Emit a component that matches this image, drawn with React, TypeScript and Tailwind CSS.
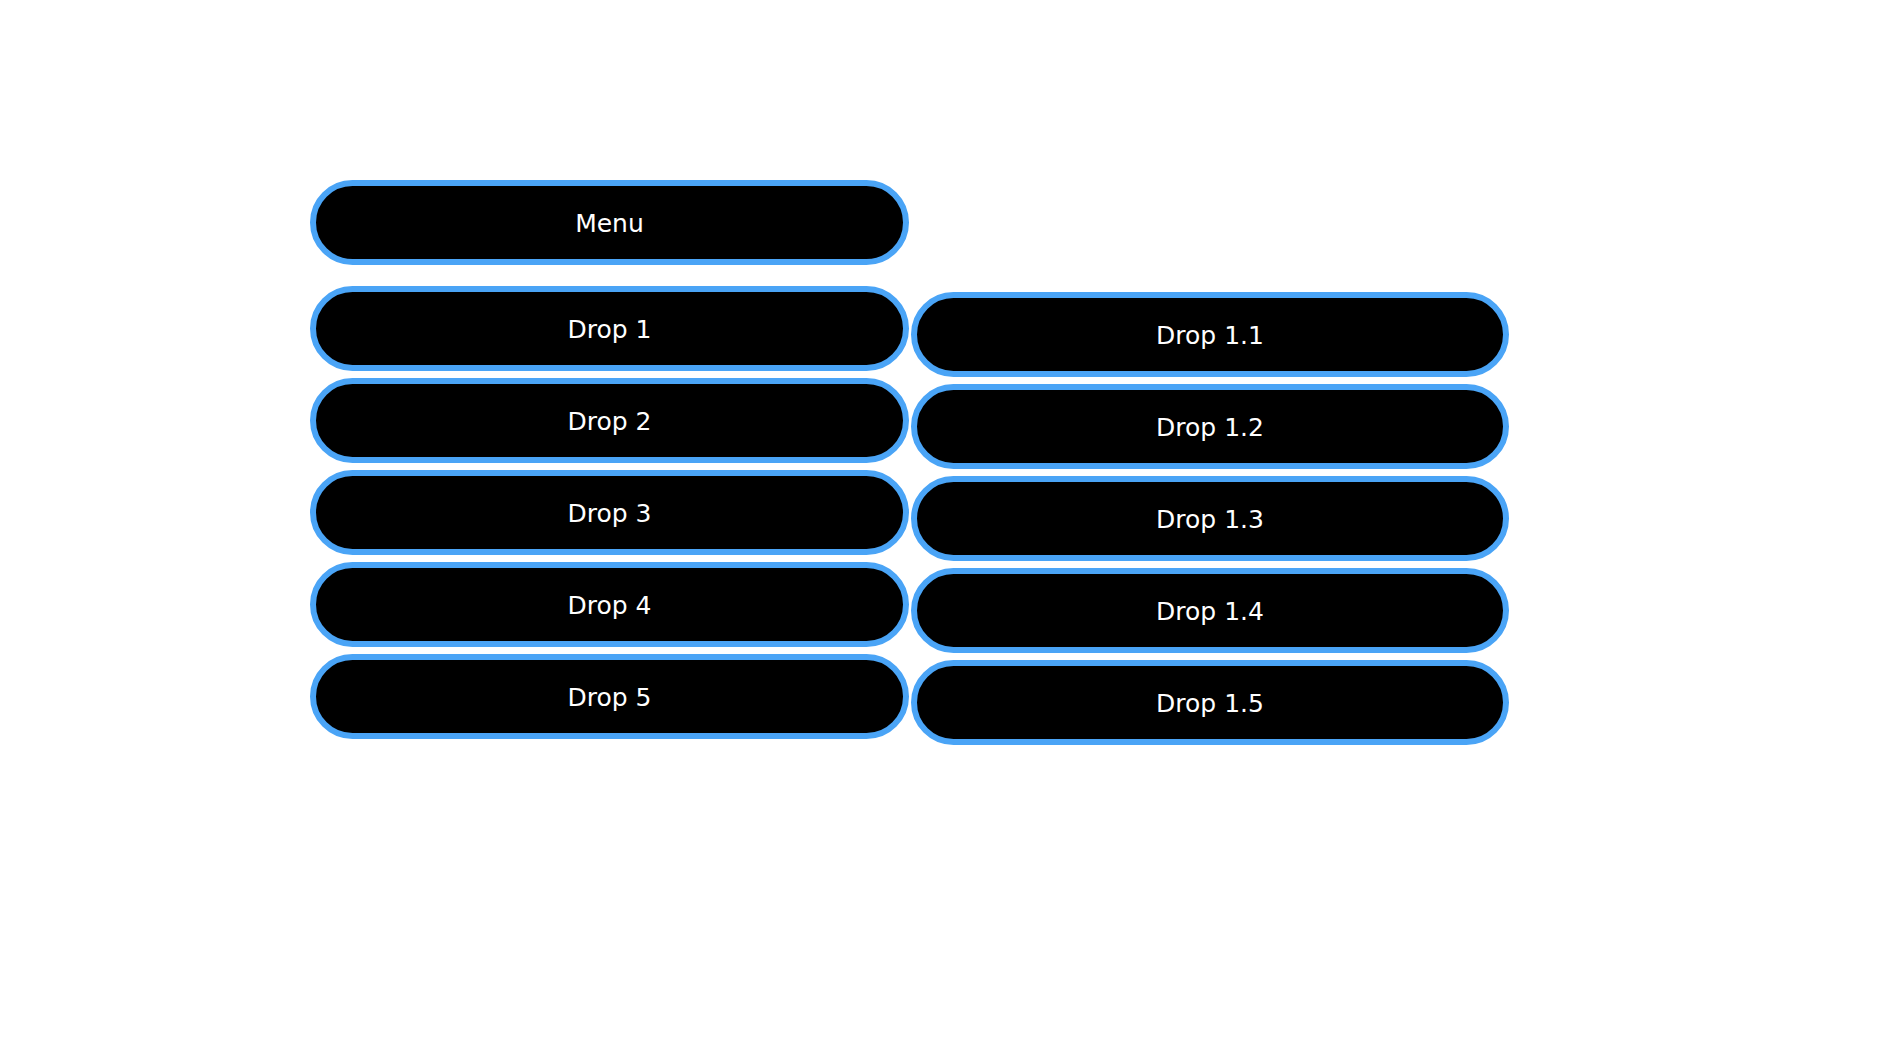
import React from "react";

const drops = ["Drop 1", "Drop 2", "Drop 3", "Drop 4", "Drop 5"];
const subDrops = ["Drop 1.1", "Drop 1.2", "Drop 1.3", "Drop 1.4", "Drop 1.5"];

function Pill({ label, w }: { label: string; w: string }) {
  return (
    <div
      className={`${w} h-[85px] rounded-full border-[6px] border-[#4aa4f6] bg-black text-white flex items-center justify-center pt-[3px] text-[25px] font-['DejaVu_Sans',sans-serif]`}
    >
      {label}
    </div>
  );
}

export default function App() {
  return (
    <div className="min-h-[1060px] bg-white pt-[180px] pl-[310px] flex gap-[2px]">
      {/* left column: menu + drops */}
      <div className="flex flex-col">
        <Pill label="Menu" w="w-[599px]" />
        <div className="mt-[21px] flex flex-col gap-[7px]">
          {drops.map((d) => (
            <Pill key={d} label={d} w="w-[599px]" />
          ))}
        </div>
      </div>
      {/* submenu */}
      <div className="pt-[112px] flex flex-col gap-[7px]">
        {subDrops.map((d) => (
          <Pill key={d} label={d} w="w-[598px]" />
        ))}
      </div>
    </div>
  );
}
